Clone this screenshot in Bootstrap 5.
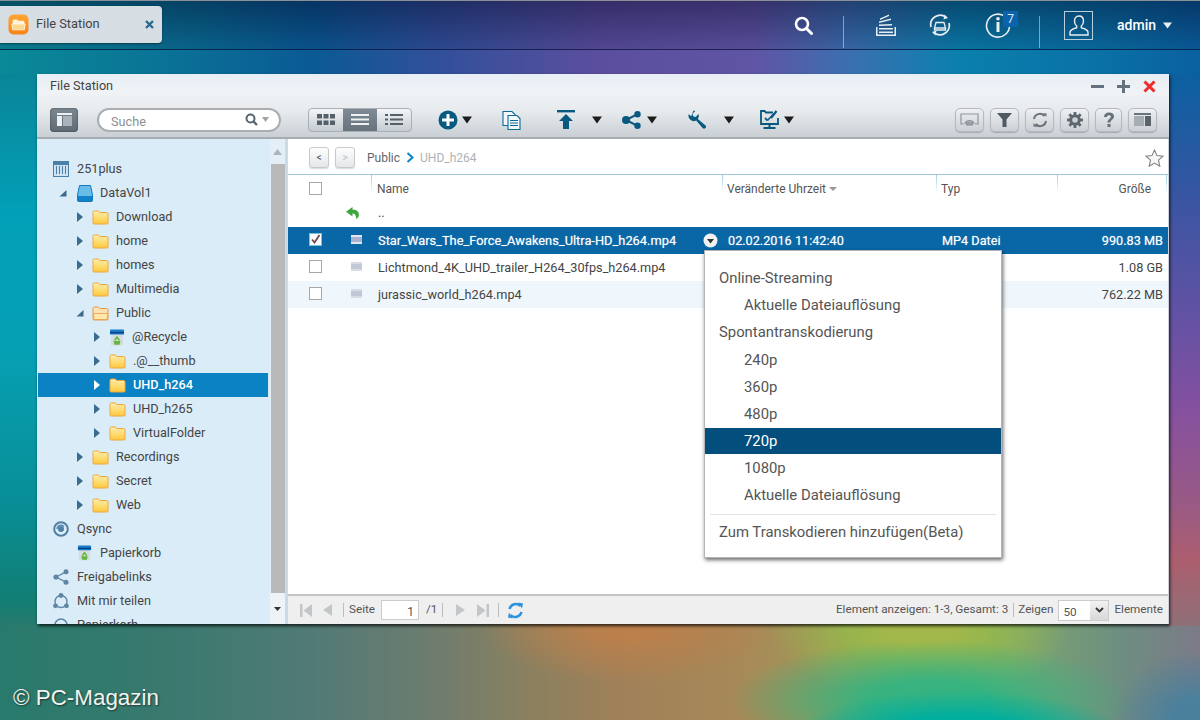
<!DOCTYPE html>
<html lang="de">
<head>
<meta charset="UTF-8">
<title>File Station</title>
<link href="https://cdn.jsdelivr.net/npm/bootstrap@5.3.0/dist/css/bootstrap.min.css" rel="stylesheet">
<script src="https://cdn.jsdelivr.net/npm/bootstrap@5.3.0/dist/js/bootstrap.bundle.min.js"></script>
<style>
html,body{height:100%;margin:0}
body{font-family:Roboto,"Liberation Sans",sans-serif;overflow:hidden}
.svg-defs{display:block;width:0;height:0}
.desktop{width:1200px;height:720px;position:relative;overflow:hidden;background:
  linear-gradient(180deg,#0a8598 0,#02a0b8 25%,#06a0b4 50%,#088e96 78%,#127e74 95%,#277a6c 100%) 0 74px/40px 552px no-repeat,
  linear-gradient(180deg,#0a60a0 0,#3a55a2 23%,#5f52a4 42%,#8450a0 60%,#9a5a85 78%,#ac5e6e 88%,#8e7078 100%) right 74px/32px 552px no-repeat,
  radial-gradient(ellipse 170px 48px at 960px 738px,#00ae9e 45%,rgba(0,174,158,0) 100%),
  radial-gradient(ellipse 200px 60px at 930px 700px,rgba(50,180,130,.95) 30%,rgba(50,180,130,0) 100%),
  radial-gradient(ellipse 150px 70px at 920px 630px,#a3b84a 20%,rgba(150,185,75,.8) 50%,rgba(150,185,75,0) 100%),
  radial-gradient(ellipse 150px 60px at 630px 625px,#bb804c 20%,rgba(187,128,76,0) 100%),
  radial-gradient(ellipse 90px 70px at 1200px 720px,#4a809c 30%,rgba(74,128,156,0) 100%),
  linear-gradient(90deg,#287a6c 0,#37796e 12%,#4f7a76 25%,#6a7c70 35%,#8a8060 44%,#a08058 52%,#a78a58 62%,#9d9a58 72%,#7fa76e 84%,#6d8f80 93%,#7c7a88 100%) 0 624px/100% 96px no-repeat,
  linear-gradient(90deg,#0a8a98 0,#0a7096 15%,#0a5a95 26%,#30509a 36%,#5b4e9e 50%,#5f55a5 63%,#3a70b0 71%,#0a80ae 80%,#0a70a5 92%,#0a60a0 100%) 0 0/100% 75px no-repeat}
.topbar{height:50px;background:linear-gradient(180deg,rgba(0,0,30,.42),rgba(0,0,30,.1));border-top:1px solid #8b8f96;border-bottom:1px solid rgba(10,20,60,.55);position:relative;color:#fff}
.app-tab{width:162px;height:37px;margin-top:5px;background:#d6dee4;border-radius:0 4px 4px 0;color:#444;font-size:12.8px;box-shadow:0 1px 2px rgba(0,0,0,.4)}
.app-icon{width:21px;height:21px;margin-left:8px;margin-right:7px;margin-top:-1px}
.tab-title{margin-top:-2px}
.tab-close{margin-left:auto;margin-right:8px;width:9px;height:9px}
.top-icons{margin-left:632px}
.top-sep{width:1px;height:32px;background:rgba(255,255,255,.45);margin-top:14px}
.ti-s1{margin-left:30px}.ti-stack{margin-left:31px}.ti-sync{margin-left:31px}.ti-info{margin-left:33px}.ti-s2{margin-left:28px}.ti-user{margin-left:24px}
.admin-name{font-size:14px;margin-left:24px;margin-right:7px;font-weight:500}
.notice-wrap{position:relative;width:26px;height:26px}
.notice-badge{position:absolute;left:18px;top:-1px;width:15px;height:16px;background:#0b62ad;font-size:12px;line-height:16px;text-align:center;color:#dfeaf5}
.user-box{width:29px;height:29px;border:1px solid #b9d0df;display:flex;align-items:center;justify-content:center}
.fs-window{position:absolute;left:37px;top:74px;width:1132px;height:550px;background:#fff;box-shadow:1px 2px 3px rgba(0,0,0,.75);display:flex;flex-direction:column;color:#444;font-size:12.7px}
.win-head{height:65px;flex:none;background:linear-gradient(180deg,#e7eef5 0,#f0f3f6 30%,#e6eaed 60%,#c9cfd4 100%);border-bottom:2px solid #a5acb2}
.win-title{height:24px;padding-left:13px;color:#444;font-size:12.7px}
.win-ctrl{margin-left:auto;padding-right:13px;gap:13px}
.win-tools{height:39px;padding-top:4px;padding-left:13px;padding-right:12px}
.panel-btn{width:28px;height:24px;border-radius:4px;background:linear-gradient(180deg,#7b8791,#5f6b75);display:flex;align-items:center;justify-content:center;box-shadow:inset 0 0 2px rgba(0,0,0,.5)}
.search-pill{width:184px;height:24px;margin-left:19px;border:2px solid #a9aeb3;border-radius:12px;background:#fff;color:#8b8f93;font-size:12.7px;padding:0 6px 0 12px}
.search-word{margin-top:4px}
.view-group{margin-left:27px;height:24px;border:1px solid #a9b0b6;border-radius:4px;overflow:hidden;background:linear-gradient(180deg,#f4f6f7,#c4cacf)}
.view-cell{width:34px;display:flex;align-items:center;justify-content:center}
.view-cell.on{background:linear-gradient(180deg,#7f8a94,#66727c)}
.t1{margin-left:26px}.t2{margin-left:3px}.t3{margin-left:29px}.t4{margin-left:36px}.t5{margin-left:16px}.t6{margin-left:19px}.t7{margin-left:5px}.t8{margin-left:30px}.t9{margin-left:16px}.t10{margin-left:25px}.t11{margin-left:4px}
.tool-right{margin-left:auto;gap:6px}
.round-btn{width:29px;height:24px;border:1px solid #b5babf;border-radius:5px;background:linear-gradient(180deg,#eef0f2,#ccd0d4);display:flex;align-items:center;justify-content:center;box-shadow:0 1px 1px rgba(0,0,0,.2)}
.round-btn.slim{width:27px}
.win-body{flex:1;min-height:0}
.side-pane{width:233px;flex:none;background:#daecf8;overflow:hidden;padding-top:18px;padding-left:1px;color:#444;font-size:12.7px}
.tree-row{height:24px;width:230px;white-space:nowrap}
.tree-row.picked{background:#0a82c4;color:#fff;font-weight:500}
.tree-row svg{flex:none}
.lv0{padding-left:15px}.lv1{padding-left:21px}.lv2{padding-left:38px}.lv3{padding-left:55px}.lv4{padding-left:39px}
.twist{width:16px;flex:none;display:flex;justify-content:flex-start}
.twist.wide{width:18px}
.tree-label{margin-left:7px}
.lv0 .tree-label,.lv4 .tree-label{margin-left:8px}
.side-scroll{width:18px;flex:none;background:#e3eef6;display:flex;flex-direction:column;align-items:center;border-right:3px solid #c8dbe6}
.scroll-thumb{width:14px;flex:1;background:#b9b9b9;margin:5px 0 0}
.scroll-up{height:14px;margin-top:6px}
.scroll-down{height:31px;display:flex;align-items:center;justify-content:center;background:#edf3f7;width:100%}
.main-pane{flex:1;min-width:0;position:relative;display:flex;flex-direction:column;border-right:1px solid #ccd2d7}
.crumbs{height:36px;flex:none;border-bottom:1px solid #9fc6d8;padding:2px 4px 0 21px;color:#666;font-size:12px}
.nav-btn{width:20px;height:21px;border:1px solid #c6cacd;border-radius:3px;background:linear-gradient(180deg,#fdfdfd,#e5e7e9);display:flex;align-items:center;justify-content:center;margin-right:6px;font-size:10px;line-height:1;color:#555;box-shadow:0 1px 1px rgba(0,0,0,.15)}
.nav-btn.off{color:#bbb}
.crumb-now{color:#aeb2b5;margin-left:6px}
.crumb-first{margin-left:6px;margin-right:6px}
.star-btn{margin-left:auto}
.table.file-table{table-layout:fixed;width:880px;font-size:12.7px;color:#444;--bs-table-bg:transparent}
.table.file-table>thead>tr>th{height:25px;padding:2px 0 0 5px;font-weight:400;color:#555;font-size:12px;vertical-align:middle;position:relative}
.table.file-table>thead>tr>th.sep::before{content:"";position:absolute;left:0;top:0;width:1px;height:18px;background:linear-gradient(180deg,#9fd0e8,rgba(159,208,232,0))}
.table.file-table>thead>tr>th.c-size::after{content:"";position:absolute;right:1px;top:0;width:1px;height:18px;background:linear-gradient(180deg,#9fd0e8,rgba(159,208,232,0))}
.table.file-table>tbody>tr>td{height:27px;padding:0 0 0 6px;vertical-align:middle;white-space:nowrap}
.table.file-table>tbody>tr.row-on>td{background:#0a67a6;color:#fff;text-shadow:0 0 1px rgba(255,255,255,.55)}
.table.file-table>tbody>tr.row-alt>td{background:#f0f7fc}
.table.file-table .c-chk{width:50px;padding-left:21px!important}
.table.file-table .c-ico{width:33px;padding-left:13px!important}
.table.file-table .c-name{width:351px}
.table.file-table th.c-name{padding-left:6px}
.table.file-table td.c-name{padding-left:7px}
.table.file-table .c-date{width:214px}
.table.file-table .c-type{width:121px}
.table.file-table .c-size{width:111px;text-align:right;padding-right:5px!important}
.table.file-table th.c-size{padding-right:17px!important}
.row-on .c-name span{font-size:12.85px}
.tick-box{width:13px;height:13px;border:1px solid #a7a7a7;background:#fff;display:block}
td .tick-box,td .file-chip{margin-top:-3px}
.tick-box.on{border-color:#6fc4df}
.file-chip{width:11px;height:9px;background:#c3c8d6;border-top:2px solid #d9dce4;border-bottom:2px solid #d9dce4;display:block}
.row-on .file-chip{background:#a6b4cf;border-color:#e0e5ee}
.back-arrow{display:block;margin-left:-5px;margin-top:-2px}
.updir{position:relative;top:-1px}
.name-cell{padding-right:4px}
.head-caret{display:inline-block;margin-left:3px;border:4px solid transparent;border-top-color:#999;border-bottom:0;vertical-align:2px}
.pane-fill{flex:1;min-height:0}
.pane-foot{height:30px;flex:none;background:#efefef;border-top:2px solid #c4c4c4;padding-left:12px;padding-right:5px;font-size:11.7px;color:#555}
.bar-sep{width:1px;height:14px;background:#bdbdbd}
.page-input{width:38px;height:20px;border:1px solid #ccc;background:#fff;text-align:right;padding-right:4px;line-height:22px;margin-left:6px;margin-right:7px;font-size:12px}
.f1{margin-left:11px}.f2{margin-left:11px}.f3{margin-left:5px}.f4{margin-left:13px}.f5{margin-left:12px}.f6{margin-left:9px}.f7{margin-left:8px}.f8{margin-left:4px}.f9{margin-left:5px}
.page-pick{width:51px;height:21px;border:1px solid #ccc;background:#fff;margin-left:5px;margin-right:5px;display:flex;line-height:22px;padding-left:4px}
.pick-arrow{margin-left:auto;width:18px;background:linear-gradient(180deg,#f2f2f2,#d8d8d8);display:flex;align-items:center;justify-content:center}
.foot-right{margin-left:auto}
.dropdown-menu.stream-menu{position:absolute;display:block;left:416px;top:111px;width:298px;height:308px;margin:0;padding:14px 0 0;border:1px solid #b5b5b5;border-radius:0;box-shadow:1px 2px 4px rgba(0,0,0,.6);font-size:14.85px;z-index:5}
.stream-menu .dropdown-item{height:27.2px;line-height:27.2px;padding:0 0 0 39px;color:#555;margin:0}
.stream-menu .dropdown-item.group{padding-left:14px}
.stream-menu .dropdown-item.active{background:#034e7c;color:#fff;height:26px;line-height:26px;margin:0 0 1px}
.stream-menu .dropdown-divider{margin:4px 5px 4px;border-color:#e2e2e2}
.caption-mark{position:absolute;left:13px;bottom:10px;color:#f2f4f0;font-family:"Liberation Sans",Arial,sans-serif;font-size:22.4px;line-height:24px;text-shadow:1px 1px 2px rgba(0,0,0,.55)}
</style>
</head>
<body>
<svg class="svg-defs" aria-hidden="true">
  <defs>
    <linearGradient id="fg" x1="0" y1="0" x2="0" y2="1"><stop offset="0" stop-color="#ffeeaa"/><stop offset="1" stop-color="#fdc93e"/></linearGradient>
    <linearGradient id="og" x1="0" y1="0" x2="0" y2="1"><stop offset="0" stop-color="#ffa535"/><stop offset="1" stop-color="#f98413"/></linearGradient>
    <symbol id="folder" viewBox="0 0 17 16"><path d="M1 3.500A1.500 1.500 0 0 1 2.500 2h3.800l1.500 1.500h6.700A1.500 1.500 0 0 1 16 5v9a1 1 0 0 1-1 1H2a1 1 0 0 1-1-1z" fill="url(#fg)" stroke="#eda63f"/></symbol>
    <symbol id="folder-open" viewBox="0 0 17 16"><path d="M1 3.500A1.500 1.500 0 0 1 2.500 2h3.800l1.500 1.500h6.700A1.500 1.500 0 0 1 16 5v9a1 1 0 0 1-1 1H2a1 1 0 0 1-1-1z" fill="#fbe3b5" stroke="#e89a4a"/><path d="M1.500 8.500h14.500l-1 6h-13z" fill="#ffe9a8" stroke="#e89a4a" stroke-width=".8"/></symbol>
    <symbol id="tw-r" viewBox="0 0 8 12"><path d="M1 1l6 5-6 5z" fill="currentColor"/></symbol>
    <symbol id="tw-d" viewBox="0 0 8 8"><path d="M7.500 1v6.500h-7z" fill="#3c6b8e"/></symbol>
    <symbol id="bin" viewBox="0 0 16 17"><path d="M2 3h12v12.500a1 1 0 0 1-1 1H3a1 1 0 0 1-1-1z" fill="#d3dcdf"/><path d="M1 1.500A1 1 0 0 1 2 .5h12a1 1 0 0 1 1 1v4H1z" fill="#1679c9"/><rect x="1" y="3" width="14" height="1.200" fill="#0c3f7c"/><path d="M8 6.800l3 4.200-1.300.8L8 9.500 6.300 11.800 5 11zM4.500 12h7l-1 3.800h-5z" fill="#62b53e"/></symbol>
    <symbol id="head-caret" viewBox="0 0 12 8"><path d="M1 .5h10L6 7.500z" fill="currentColor"/></symbol>
  </defs>
</svg>

<div class="desktop">
  <div class="topbar d-flex">
    <div class="app-tab d-flex align-items-center">
      <svg class="app-icon" viewBox="0 0 21 21"><rect x=".5" y=".5" width="20" height="20" rx="5" fill="url(#og)"/><path d="M4.500 7a1.500 1.500 0 0 1 1.500-1.500h3l1.200 1.200h5A1.500 1.500 0 0 1 16.500 8.200V15H4.500z" fill="#fff3d8"/><path d="M3.800 10h13.400l-.9 5.800H4.700z" fill="#ffd98a" stroke="#fff" stroke-width=".7"/></svg>
      <span class="tab-title">File Station</span>
      <svg class="tab-close" viewBox="0 0 9 9"><path d="M1 1l7 7M8 1L1 8" stroke="#2b6a8e" stroke-width="2.400"/></svg>
    </div>
    <div class="top-icons d-flex align-items-center">
      <svg class="ti-search" width="19" height="19" viewBox="0 0 19 19"><circle cx="8" cy="8" r="6" fill="none" stroke="#fff" stroke-width="2.600"/><path d="M12.500 12.500l5 5" stroke="#fff" stroke-width="3" stroke-linecap="round"/></svg>
      <span class="top-sep ti-s1"></span>
      <svg class="ti-stack" width="22" height="23" viewBox="0 0 22 23"><path d="M1 13v9h20v-9h-1.500v7.500h-17V13z" fill="#e8eef2"/><path d="M4 17.500h14v1.500H4zM4 14h14v1.500H4zM4 10.500l13-.5v1.500l-13 .5zM4 7.500l12-3v1.500l-12 3zM5 4.500l9-4v1.500l-9 4z" fill="#e8eef2"/></svg>
      <svg class="ti-sync" width="24" height="24" viewBox="0 0 24 24" fill="none" stroke="#e8eef2" stroke-width="1.700"><path d="M3 14A9.500 9.500 0 0 1 18 4.200"/><path d="M21 10a9.500 9.500 0 0 1-15 9.800"/><path d="M16.500 1.500l3.500 3.500-4.500 1.500zM7.500 22.500L4 19l4.500-1.500z" fill="#e8eef2" stroke="none"/><path d="M8 9.500h8l1.500 5.500h-11zM6.500 15h11v2h-11z" stroke-width="1.300"/></svg>
      <div class="notice-wrap ti-info">
        <svg width="26" height="26" viewBox="0 0 26 26" fill="none"><path d="M20 4.500A11.500 11.500 0 1 0 24.500 13" stroke="#e8eef2" stroke-width="1.600"/><rect x="11.500" y="10" width="3" height="10" fill="#e8eef2"/><circle cx="13" cy="6.800" r="1.800" fill="#e8eef2"/></svg>
        <span class="notice-badge">7</span>
      </div>
      <span class="top-sep ti-s2"></span>
      <span class="user-box ti-user"><svg width="22" height="23" viewBox="0 0 22 23" fill="none" stroke="#e8eef2" stroke-width="1.400"><path d="M11 2c-3 0-4.500 2.200-4.500 5 0 2.300 1 4 2.200 5v1.800c-2.500.8-6.700 1.800-6.700 4.500V21h18v-2.700c0-2.700-4.200-3.700-6.700-4.500V12c1.200-1 2.200-2.700 2.200-5 0-2.800-1.500-5-4.500-5z"/></svg></span>
      <span class="admin-name">admin</span>
      <svg width="9" height="7" viewBox="0 0 9 7"><path d="M0 .5h9L4.500 6.500z" fill="#e8eef2"/></svg>
    </div>
  </div>

  <div class="fs-window">
    <div class="win-head">
      <div class="win-title d-flex align-items-center">
        <span>File Station</span>
        <div class="win-ctrl d-flex align-items-center">
          <svg width="13" height="13" viewBox="0 0 13 13"><rect y="5" width="13" height="3" fill="#63727e"/></svg>
          <svg width="13" height="13" viewBox="0 0 13 13"><path d="M5 0h3v5h5v3H8v5H5V8H0V5h5z" fill="#63727e"/></svg>
          <svg width="13" height="13" viewBox="0 0 13 13"><path d="M1.500 1.500l10 10M11.500 1.500l-10 10" stroke="#f12a2c" stroke-width="3"/></svg>
        </div>
      </div>
      <div class="win-tools d-flex align-items-center">
        <span class="panel-btn"><svg width="15" height="13" viewBox="0 0 15 13"><rect width="15" height="2" fill="#eef1f3"/><rect y="3" width="5" height="10" fill="#eef1f3"/><rect x="6" y="3" width="9" height="10" fill="#a9b3bb"/></svg></span>
        <div class="search-pill d-flex align-items-center">
          <span class="search-word">Suche</span>
          <svg class="ms-auto me-1" width="13" height="13" viewBox="0 0 13 13"><circle cx="5.500" cy="5.500" r="4" fill="none" stroke="#566570" stroke-width="2"/><path d="M8.500 8.500l3.500 3.500" stroke="#566570" stroke-width="2.400"/></svg>
          <svg class="me-1" width="7" height="5" viewBox="0 0 7 5"><path d="M0 0h7L3.500 5z" fill="#9ca3a9"/></svg>
        </div>
        <div class="view-group d-flex">
          <span class="view-cell"><svg width="18" height="11" viewBox="0 0 18 11" fill="#55606a"><rect width="5" height="4.500"/><rect x="6.500" width="5" height="4.500"/><rect x="13" width="5" height="4.500"/><rect y="6.500" width="5" height="4.500"/><rect x="6.500" y="6.500" width="5" height="4.500"/><rect x="13" y="6.500" width="5" height="4.500"/></svg></span>
          <span class="view-cell on"><svg width="18" height="11" viewBox="0 0 18 11" fill="#eef1f3"><rect width="18" height="2"/><rect y="4.500" width="18" height="2"/><rect y="9" width="18" height="2"/></svg></span>
          <span class="view-cell"><svg width="18" height="11" viewBox="0 0 18 11" fill="#55606a"><rect width="3" height="2"/><rect x="5" width="13" height="2"/><rect y="4.500" width="3" height="2"/><rect x="5" y="4.500" width="13" height="2"/><rect y="9" width="3" height="2"/><rect x="5" y="9" width="13" height="2"/></svg></span>
        </div>
        <svg class="t1" width="20" height="20" viewBox="0 0 20 20"><circle cx="10" cy="10" r="9.500" fill="#07597f"/><path d="M8.500 4h3v4.500H16v3h-4.500V16h-3v-4.500H4v-3h4.500z" fill="#fff"/></svg>
        <svg class="t2" width="12" height="8" viewBox="0 0 12 8" color="#1c1c1c"><use href="#head-caret"/></svg>
        <svg class="t3" width="19" height="20" viewBox="0 0 19 20" fill="none" stroke="#0b6a96" stroke-width="1.100"><path d="M1 1.500h9l3 3v11H1z" fill="#f4f8fa"/><path d="M6 5.500h9l3 3v11H6z" fill="#f4f8fa"/><path d="M8 10.500h8M8 13h8M8 15.500h8" stroke-width="1.200"/></svg>
        <svg class="t4" width="18" height="20" viewBox="0 0 18 20"><rect width="18" height="2.400" fill="#07597f"/><path d="M9 4l7 7h-4v8H6v-8H2z" fill="#07597f"/></svg>
        <svg class="t5" width="12" height="8" viewBox="0 0 12 8" color="#1c1c1c"><use href="#head-caret"/></svg>
        <svg class="t6" width="19" height="18" viewBox="0 0 19 18" fill="#07597f"><circle cx="4" cy="9" r="4"/><circle cx="15.500" cy="3.200" r="3.200"/><circle cx="15.500" cy="14.800" r="3.200"/><path d="M4 9l11.500-5.800M4 9l11.500 5.800" stroke="#07597f" stroke-width="2"/></svg>
        <svg class="t7" width="12" height="8" viewBox="0 0 12 8" color="#1c1c1c"><use href="#head-caret"/></svg>
        <svg class="t8" width="19" height="19" viewBox="0 0 19 19"><path d="M5.500 .5a5.300 5.300 0 0 1 1.800.4L4.500 3.700l.6 2.600 2.600.6L10.500 4.100A5.300 5.300 0 0 1 9.800 8.900L17.600 15.500a2 2 0 0 1-2.800 2.800L8.200 10.500A5.300 5.300 0 0 1 .7 4.300l2.500 1.900z" fill="#07597f"/></svg>
        <svg class="t9" width="12" height="8" viewBox="0 0 12 8" color="#1c1c1c"><use href="#head-caret"/></svg>
        <svg class="t10" width="19" height="19" viewBox="0 0 19 19" fill="none" stroke="#07597f"><path d="M13 2.500H6L4.500 1H1v13h17V8" stroke-width="1.800"/><path d="M5 8l2.500 2.500" stroke-width="1.800"/><path d="M7.500 10.500L13 4.500" stroke-width="1.500"/><path d="M16.500 1L11 8" stroke-width="2.200"/><path d="M9.500 14v3M3.500 18h12" stroke-width="2"/></svg>
        <svg class="t11" width="12" height="8" viewBox="0 0 12 8" color="#1c1c1c"><use href="#head-caret"/></svg>
        <div class="tool-right d-flex">
          <span class="round-btn"><svg width="19" height="14" viewBox="0 0 19 14" fill="none" stroke="#8f979e" stroke-width="1.200"><path d="M4 11H1V1h17v10h-3"/><path d="M5 11a4.500 3.500 0 0 1 9 0"/><rect x="6.500" y="9" width="6" height="3" fill="#9aa1a7"/></svg></span>
          <span class="round-btn"><svg width="15" height="14" viewBox="0 0 15 14"><path d="M0 0h15L9.500 6.500V14h-4V6.500z" fill="#4e5a64"/></svg></span>
          <span class="round-btn"><svg width="16" height="16" viewBox="0 0 16 16" fill="none" stroke="#66717a" stroke-width="2"><path d="M2 7a6 6 0 0 1 10.500-3"/><path d="M14 9a6 6 0 0 1-10.500 3"/><path d="M11 1l3.500.5V5zM5 15l-3.500-.5V11z" fill="#66717a" stroke="none"/></svg></span>
          <span class="round-btn"><svg width="16" height="16" viewBox="0 0 16 16"><g fill="#5c6770"><circle cx="8" cy="8" r="5.800"/><rect x="6.600" y="0" width="2.800" height="16"/><rect x="0" y="6.600" width="16" height="2.800"/><rect x="6.600" y="0" width="2.800" height="16" transform="rotate(45 8 8)"/><rect x="6.600" y="0" width="2.800" height="16" transform="rotate(-45 8 8)"/></g><circle cx="8" cy="8" r="2.800" fill="#ccd1d5"/></svg></span>
          <span class="round-btn slim"><svg width="12" height="16" viewBox="0 0 12 16"><path d="M1 5c0-3 2-4.500 5-4.500S11 2 11 4.500c0 3-3.500 3.200-3.500 6h-3c0-3.500 3.400-4 3.400-5.800 0-1-.8-1.500-1.900-1.500S4 3.700 4 5z" fill="#66717a"/><rect x="4.500" y="12" width="3" height="3" fill="#66717a"/></svg></span>
          <span class="round-btn"><svg width="17" height="13" viewBox="0 0 17 13"><rect width="17" height="2" fill="#6a747d"/><rect y="3" width="10" height="10" fill="#a5acb2"/><rect x="11" y="3" width="6" height="10" fill="#59636c"/></svg></span>
        </div>
      </div>
    </div>

    <div class="win-body d-flex">
      <div class="side-pane">
        <div class="tree-row lv0 d-flex align-items-center"><svg width="16" height="16" viewBox="0 0 16 16" fill="none" stroke="#4a7fa8"><rect x=".5" y=".5" width="15" height="15" fill="#cfe2f0"/><rect x=".5" y=".5" width="15" height="3" fill="#4a7fa8"/><path d="M3.500 5v8M6.500 5v8M9.500 5v8M12.500 5v8"/></svg><span class="tree-label">251plus</span></div>
        <div class="tree-row lv1 d-flex align-items-center"><span class="twist wide"><svg width="8" height="8"><use href="#tw-d"/></svg></span><svg width="16" height="17" viewBox="0 0 16 17"><path d="M2.500.5h11L15.500 10v5.500a1 1 0 0 1-1 1h-13a1 1 0 0 1-1-1V10z" fill="#66bdea" stroke="#1379bd"/><rect x=".8" y="11" width="14.400" height="5" fill="#1381c9"/></svg><span class="tree-label">DataVol1</span></div>
        <div class="tree-row lv2 d-flex align-items-center"><span class="twist"><svg width="8" height="12" color="#3c6b8e"><use href="#tw-r"/></svg></span><svg width="17" height="16"><use href="#folder"/></svg><span class="tree-label">Download</span></div>
        <div class="tree-row lv2 d-flex align-items-center"><span class="twist"><svg width="8" height="12" color="#3c6b8e"><use href="#tw-r"/></svg></span><svg width="17" height="16"><use href="#folder"/></svg><span class="tree-label">home</span></div>
        <div class="tree-row lv2 d-flex align-items-center"><span class="twist"><svg width="8" height="12" color="#3c6b8e"><use href="#tw-r"/></svg></span><svg width="17" height="16"><use href="#folder"/></svg><span class="tree-label">homes</span></div>
        <div class="tree-row lv2 d-flex align-items-center"><span class="twist"><svg width="8" height="12" color="#3c6b8e"><use href="#tw-r"/></svg></span><svg width="17" height="16"><use href="#folder"/></svg><span class="tree-label">Multimedia</span></div>
        <div class="tree-row lv2 d-flex align-items-center"><span class="twist"><svg width="8" height="8"><use href="#tw-d"/></svg></span><svg width="17" height="16"><use href="#folder-open"/></svg><span class="tree-label">Public</span></div>
        <div class="tree-row lv3 d-flex align-items-center"><span class="twist"><svg width="8" height="12" color="#3c6b8e"><use href="#tw-r"/></svg></span><svg width="16" height="17"><use href="#bin"/></svg><span class="tree-label">@Recycle</span></div>
        <div class="tree-row lv3 d-flex align-items-center"><span class="twist"><svg width="8" height="12" color="#3c6b8e"><use href="#tw-r"/></svg></span><svg width="17" height="16"><use href="#folder"/></svg><span class="tree-label">.@__thumb</span></div>
        <div class="tree-row lv3 picked d-flex align-items-center"><span class="twist"><svg width="8" height="12" color="#fff"><use href="#tw-r"/></svg></span><svg width="17" height="16"><use href="#folder"/></svg><span class="tree-label">UHD_h264</span></div>
        <div class="tree-row lv3 d-flex align-items-center"><span class="twist"><svg width="8" height="12" color="#3c6b8e"><use href="#tw-r"/></svg></span><svg width="17" height="16"><use href="#folder"/></svg><span class="tree-label">UHD_h265</span></div>
        <div class="tree-row lv3 d-flex align-items-center"><span class="twist"><svg width="8" height="12" color="#3c6b8e"><use href="#tw-r"/></svg></span><svg width="17" height="16"><use href="#folder"/></svg><span class="tree-label">VirtualFolder</span></div>
        <div class="tree-row lv2 d-flex align-items-center"><span class="twist"><svg width="8" height="12" color="#3c6b8e"><use href="#tw-r"/></svg></span><svg width="17" height="16"><use href="#folder"/></svg><span class="tree-label">Recordings</span></div>
        <div class="tree-row lv2 d-flex align-items-center"><span class="twist"><svg width="8" height="12" color="#3c6b8e"><use href="#tw-r"/></svg></span><svg width="17" height="16"><use href="#folder"/></svg><span class="tree-label">Secret</span></div>
        <div class="tree-row lv2 d-flex align-items-center"><span class="twist"><svg width="8" height="12" color="#3c6b8e"><use href="#tw-r"/></svg></span><svg width="17" height="16"><use href="#folder"/></svg><span class="tree-label">Web</span></div>
        <div class="tree-row lv0 d-flex align-items-center"><svg width="16" height="16" viewBox="0 0 16 16" fill="none" stroke="#4f7fa3" stroke-width="2"><circle cx="8" cy="8" r="6.800"/><circle cx="8" cy="8" r="3" fill="#4f7fa3" stroke="none"/><path d="M4 8a4 4 0 0 1 7-2.500" stroke-width="1.200"/></svg><span class="tree-label">Qsync</span></div>
        <div class="tree-row lv4 d-flex align-items-center"><svg width="15" height="16" viewBox="0 0 16 17"><use href="#bin"/></svg><span class="tree-label">Papierkorb</span></div>
        <div class="tree-row lv0 d-flex align-items-center"><svg width="16" height="16" viewBox="0 0 16 16" fill="#5f86a4"><circle cx="3" cy="8" r="2.600"/><circle cx="13" cy="2.800" r="2.500"/><circle cx="13" cy="13.200" r="2.500"/><path d="M3 8l10-5.200M3 8l10 5.200" stroke="#5f86a4" stroke-width="1.300"/></svg><span class="tree-label">Freigabelinks</span></div>
        <div class="tree-row lv0 d-flex align-items-center"><svg width="16" height="16" viewBox="0 0 16 16"><circle cx="8" cy="8.500" r="6" fill="none" stroke="#5f86a4" stroke-width="1.400"/><circle cx="8" cy="2.500" r="2.400" fill="#5f86a4"/><circle cx="2.500" cy="12.800" r="2.400" fill="#5f86a4"/><circle cx="13.500" cy="12.800" r="2.400" fill="#5f86a4"/></svg><span class="tree-label">Mit mir teilen</span></div>
        <div class="tree-row lv0 d-flex align-items-center"><svg width="16" height="16" viewBox="0 0 16 16"><circle cx="8" cy="8" r="6" fill="none" stroke="#5f86a4" stroke-width="1.600"/></svg><span class="tree-label">Papierkorb</span></div>
      </div>
      <div class="side-scroll">
        <svg class="scroll-up" width="9" height="6" viewBox="0 0 9 6"><path d="M4.500 0L9 6H0z" fill="#aab4bb"/></svg>
        <div class="scroll-thumb"></div>
        <div class="scroll-down"><svg width="7" height="4" viewBox="0 0 7 4"><path d="M0 0h7L3.500 4z" fill="#333"/></svg></div>
      </div>
      <div class="main-pane">
        <div class="crumbs d-flex align-items-center">
          <span class="nav-btn">&lt;</span>
          <span class="nav-btn off">&gt;</span>
          <span class="crumb-first">Public</span>
          <svg width="8" height="11" viewBox="0 0 8 11" fill="none"><path d="M1.500 1l5 4.500-5 4.500" stroke="#0a84c6" stroke-width="2"/></svg>
          <span class="crumb-now">UHD_h264</span>
          <svg class="star-btn" width="19" height="18" viewBox="0 0 19 18"><path d="M9.500 1l2.500 5.600 6 .6-4.500 4 1.300 6-5.300-3.100-5.300 3.100 1.300-6-4.500-4 6-.6z" fill="#f7f7f7" stroke="#7f8488" stroke-width="1.100"/></svg>
        </div>
        <table class="table table-borderless file-table mb-0">
          <thead>
            <tr>
              <th class="c-chk"><span class="tick-box"></span></th>
              <th class="c-ico"></th>
              <th class="sep c-name">Name</th>
              <th class="sep c-date">Veränderte Uhrzeit<span class="head-caret"></span></th>
              <th class="sep c-type">Typ</th>
              <th class="sep c-size">Größe</th>
            </tr>
          </thead>
          <tbody>
            <tr>
              <td class="c-chk"></td>
              <td class="c-ico"><svg class="back-arrow" width="14" height="12" viewBox="0 0 14 12"><path d="M6.500 0L0 4.700 6.500 9.500V6.500c2.500 0 3.500 1.800 3.800 5.500 3.500-1.500 4.700-9-3.800-9.500z" fill="#3fa63f"/></svg></td>
              <td class="c-name"><span class="updir">..</span></td><td></td><td></td><td></td>
            </tr>
            <tr class="row-on">
              <td class="c-chk"><span class="tick-box on"><svg class="d-block" width="11" height="11" viewBox="0 0 11 11"><path d="M2 5.500l2.500 3L9.500 1" fill="none" stroke="#6b4a4a" stroke-width="1.800"/></svg></span></td>
              <td class="c-ico"><span class="file-chip"></span></td>
              <td class="c-name"><div class="name-cell d-flex justify-content-between align-items-center"><span>Star_Wars_The_Force_Awakens_Ultra-HD_h264.mp4</span><svg width="15" height="15" viewBox="0 0 15 15"><circle cx="7.500" cy="7.500" r="7" fill="#f2f2f2"/><path d="M4 6h7l-3.500 4.500z" fill="#333"/></svg></div></td>
              <td>02.02.2016 11:42:40</td>
              <td>MP4 Datei</td>
              <td class="c-size">990.83 MB</td>
            </tr>
            <tr>
              <td class="c-chk"><span class="tick-box"></span></td>
              <td class="c-ico"><span class="file-chip"></span></td>
              <td class="c-name">Lichtmond_4K_UHD_trailer_H264_30fps_h264.mp4</td>
              <td></td><td></td>
              <td class="c-size">1.08 GB</td>
            </tr>
            <tr class="row-alt">
              <td class="c-chk"><span class="tick-box"></span></td>
              <td class="c-ico"><span class="file-chip"></span></td>
              <td class="c-name">jurassic_world_h264.mp4</td>
              <td></td><td></td>
              <td class="c-size">762.22 MB</td>
            </tr>
          </tbody>
        </table>
        <div class="pane-fill"></div>
        <div class="pane-foot d-flex align-items-center">
          <svg width="12" height="13" viewBox="0 0 12 13" fill="#c2c6c9"><rect width="2.500" height="13"/><path d="M12 0v13L3.500 6.500z"/></svg>
          <svg class="f1" width="9" height="12" viewBox="0 0 9 12" fill="#c2c6c9"><path d="M9 0v12L0 6z"/></svg>
          <span class="bar-sep f2"></span>
          <span class="f3">Seite</span>
          <span class="page-input">1</span>
          <span>/1</span>
          <span class="bar-sep f3"></span>
          <svg class="f4" width="9" height="12" viewBox="0 0 9 12" fill="#c2c6c9"><path d="M0 0v12l9-6z"/></svg>
          <svg class="f5" width="12" height="13" viewBox="0 0 12 13" fill="#c2c6c9"><rect x="9.500" width="2.500" height="13"/><path d="M0 0v13l8.500-6.500z"/></svg>
          <span class="bar-sep f6"></span>
          <svg class="f7" width="17" height="17" viewBox="0 0 17 17" fill="none" stroke="#2b93dd" stroke-width="2.400"><path d="M2.500 7a6.500 6.500 0 0 1 11-3"/><path d="M14.500 10a6.500 6.500 0 0 1-11 3"/><path d="M11 .5l5 1-1 5zM6 16.500l-5-1 1-5z" fill="#2b93dd" stroke="none"/></svg>
          <span class="foot-right">Element anzeigen: 1-3, Gesamt: 3</span>
          <span class="bar-sep f9"></span>
          <span class="f8">Zeigen</span>
          <div class="page-pick"><span>50</span><span class="pick-arrow"><svg width="9" height="6" viewBox="0 0 9 6" fill="none"><path d="M1 1l3.500 3.500L8 1" stroke="#333" stroke-width="1.800"/></svg></span></div>
          <span>Elemente</span>
        </div>
        <ul class="dropdown-menu stream-menu list-unstyled">
          <li><span class="dropdown-item group">Online-Streaming</span></li>
          <li><span class="dropdown-item">Aktuelle Dateiauflösung</span></li>
          <li><span class="dropdown-item group">Spontantranskodierung</span></li>
          <li><span class="dropdown-item">240p</span></li>
          <li><span class="dropdown-item">360p</span></li>
          <li><span class="dropdown-item">480p</span></li>
          <li><span class="dropdown-item active">720p</span></li>
          <li><span class="dropdown-item">1080p</span></li>
          <li><span class="dropdown-item">Aktuelle Dateiauflösung</span></li>
          <li><hr class="dropdown-divider"></li>
          <li><span class="dropdown-item group">Zum Transkodieren hinzufügen(Beta)</span></li>
        </ul>
      </div>
    </div>
  </div>

  <div class="caption-mark">© PC-Magazin</div>
</div>
</body>
</html>
